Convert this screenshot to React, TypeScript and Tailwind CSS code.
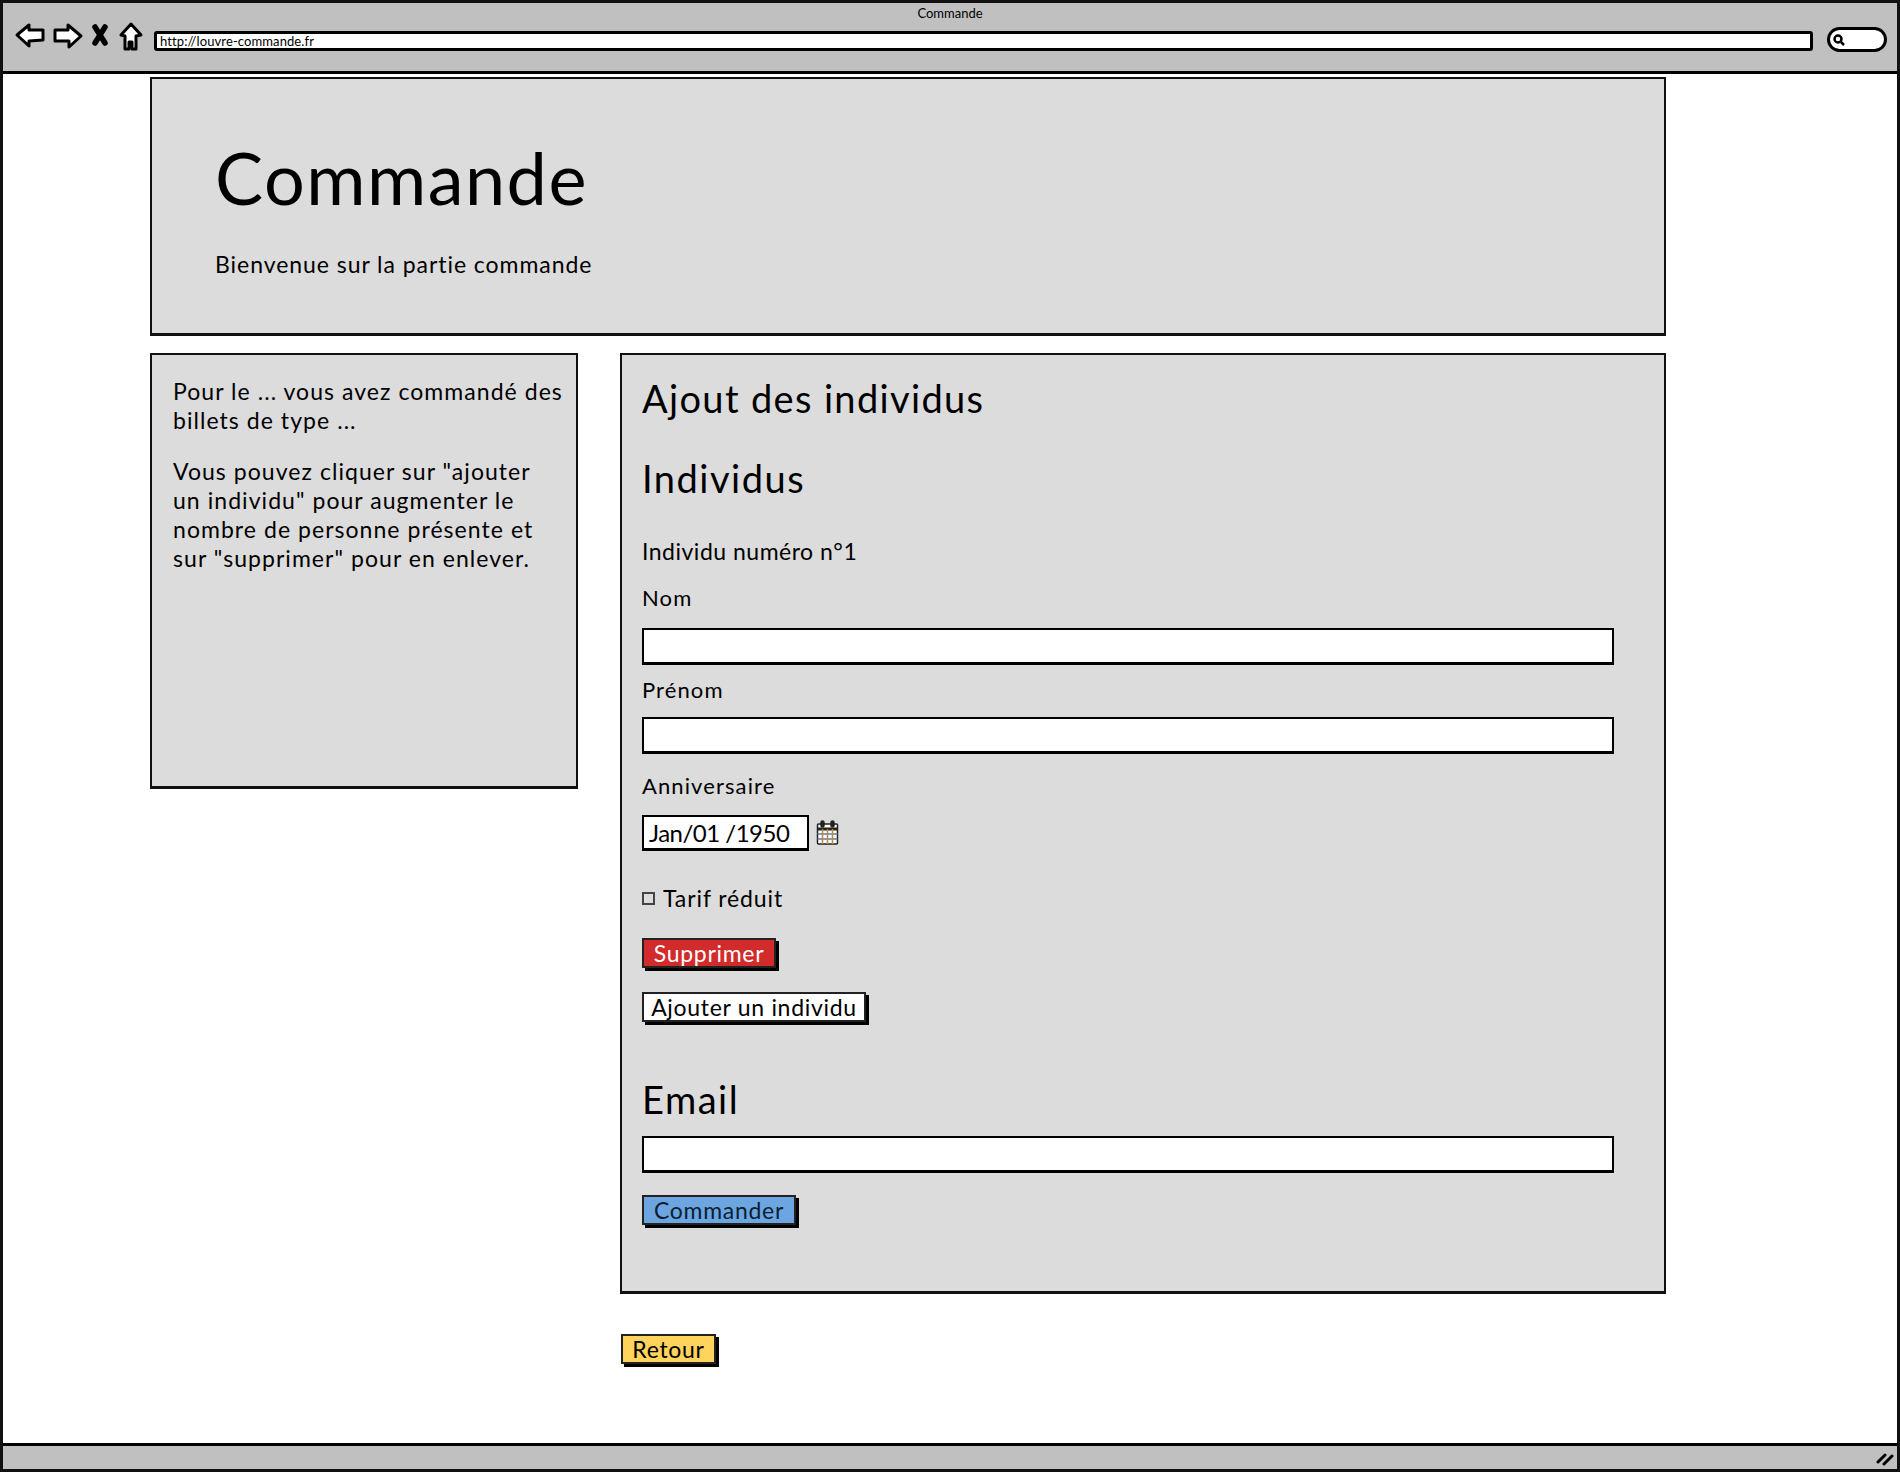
import React from "react";

function Field({ label, mt }: { label: string; mt: string }) {
  return (
    <div className={mt}>
      <div className="text-[22px] leading-[28px] tracking-[1.1px]">{label}</div>
    </div>
  );
}

function Input({ mt }: { mt: string }) {
  return <div className={`${mt} h-[37px] w-[972px] bg-white border-2 border-black border-b-[3px]`} />;
}

function Btn({ children, bg, text, mt, w }: { children: React.ReactNode; bg: string; text: string; mt: string; w: string }) {
  return (
    <div className={`${mt} ${w} ${bg} ${text} h-[30px] border-2 border-[#222] shadow-[3px_3px_0_#000] text-[23px] leading-[26px] text-center tracking-[0.7px]`}>
      {children}
    </div>
  );
}

export default function App() {
  return (
    <div className="w-[1900px] h-[1472px] bg-white border-[3px] border-[#111] flex flex-col text-black font-['Lato','Liberation_Sans',sans-serif] overflow-hidden">
      <div className="h-[71px] shrink-0 bg-[#c0c0c0] border-b-[3px] border-black relative">
        <div className="text-center text-[13px] leading-[16px] pt-[2px]">Commande</div>
        <div className="flex items-center pl-[11px] mt-[3px]">
          <svg width="130" height="34" viewBox="0 0 130 34" fill="white" stroke="black" strokeWidth="3" strokeLinejoin="round" className="shrink-0 -mt-[3px]">
            <path d="M3 14 L15 4 L15 9 L29 9 L29 19 L15 20 L15 25 Z" />
            <path d="M41 9 L54 9 L54 4 L67 15 L55 26 L55 20 L41 20 Z" />
            <path d="M81 6 L91 22 M91 6 L81 22" strokeWidth="5.5" fill="none" strokeLinecap="round" />
            <path d="M107 14 L117 3 L127 14 L122 15 L122 28 L118 28 L118 21 L115 21 L115 28 L111 28 L111 15 Z" />
          </svg>
          <div className="ml-[10px] mt-[2px] w-[1659px] h-[20px] bg-white border-[3px] border-black rounded-[3px] text-[13px] leading-[14px] pl-[3px] tracking-[0.1px]">http://louvre-commande.fr</div>
          <div className="ml-[14px] w-[60px] h-[25px] bg-white border-[3px] border-black rounded-[13px] flex items-center pl-[2px]">
            <svg width="14" height="14" viewBox="0 0 14 14" fill="none" stroke="black" strokeWidth="2.5"><circle cx="6" cy="6" r="3.5" /><path d="M9 9 L12 12" /></svg>
          </div>
        </div>
      </div>

      <div className="flex-1 min-h-0 pl-[147px] pt-[3px]">
        <div className="w-[1516px] h-[259px] bg-[#dcdcdc] border-2 border-[#111] border-b-[3px] pl-[63px] pt-[59px]">
          <div className="text-[72px] leading-[78px] tracking-[1.5px]">Commande</div>
          <div className="mt-[33px] text-[23px] leading-[30px] tracking-[0.95px]">Bienvenue sur la partie commande</div>
        </div>

        <div className="flex gap-[42px] mt-[17px] items-start">
          <div className="w-[428px] h-[436px] bg-[#dcdcdc] border-2 border-[#111] border-b-[3px] pl-[21px] pr-[8px] pt-[22px] text-[23px] leading-[29px] tracking-[1.05px]">
            <p className="whitespace-nowrap">Pour le ... vous avez commandé des<br />billets de type ...</p>
            <p className="mt-[22px] whitespace-nowrap">Vous pouvez cliquer sur "ajouter<br />un individu" pour augmenter le<br />nombre de personne présente et<br />sur "supprimer" pour en enlever.</p>
          </div>

          <div className="flex flex-col">
            <div className="w-[1046px] h-[941px] bg-[#dcdcdc] border-2 border-[#111] border-b-[3px] pl-[20px] pt-[20px]">
              <div className="text-[38px] leading-[46px] tracking-[1.35px]">Ajout des individus</div>
              <div className="mt-[34px] text-[38px] leading-[46px] tracking-[1.5px]">Individus</div>
              <div className="mt-[35px] text-[23px] leading-[30px] tracking-[0.5px]">Individu numéro n°1</div>
              <Field label="Nom" mt="mt-[18px]" />
              <Input mt="mt-[16px]" />
              <Field label="Prénom" mt="mt-[11px]" />
              <Input mt="mt-[13px]" />
              <Field label="Anniversaire" mt="mt-[18px]" />
              <div className="mt-[15px] flex items-center">
                <div className="w-[167px] h-[36px] bg-white border-2 border-black border-b-[3px] pl-[5px] text-[24px] leading-[31px] tracking-[-0.5px]">Jan/01 /1950</div>
                <svg className="ml-[7px]" width="24" height="26" viewBox="0 0 24 26" fill="white" stroke="#222" strokeWidth="1.5">
                  <rect x="1.5" y="4" width="20" height="20" rx="1" />
                  <path d="M1.5 9 H21.5" strokeWidth="3" />
                  <path d="M1.5 14 H21.5 M1.5 19 H21.5" stroke="#5b7fa6" />
                  <path d="M6.5 9 V24 M11.5 9 V24 M16.5 9 V24" stroke="#b8893f" />
                  <rect x="5" y="1" width="3" height="6" rx="1.5" fill="#222" />
                  <rect x="15" y="1" width="3" height="6" rx="1.5" fill="#222" />
                </svg>
              </div>
              <div className="mt-[32px] flex items-center h-[30px]">
                <div className="w-[13px] h-[13px] bg-transparent border-2 border-[#444]" />
                <div className="ml-[8px] text-[23px] tracking-[0.9px]">Tarif réduit</div>
              </div>
              <Btn bg="bg-[#d22b2b]" text="text-white" mt="mt-[25px]" w="w-[134px]">Supprimer</Btn>
              <Btn bg="bg-white" text="text-black" mt="mt-[24px]" w="w-[224px]">Ajouter un individu</Btn>
              <div className="mt-[54px] text-[38px] leading-[46px] tracking-[1.5px]">Email</div>
              <Input mt="mt-[14px]" />
              <Btn bg="bg-[#6ca5e0]" text="text-[#0a1f33]" mt="mt-[22px]" w="w-[154px]">Commander</Btn>
            </div>
            <Btn bg="bg-[#ffd35c]" text="text-black" mt="mt-[40px] ml-[1px]" w="w-[95px]">Retour</Btn>
          </div>
        </div>
      </div>

      <div className="h-[26px] shrink-0 bg-[#c0c0c0] border-t-[3px] border-black flex items-center justify-end pr-[3px]">
        <svg width="18" height="16" viewBox="0 0 18 16" stroke="black" strokeWidth="3" strokeLinecap="round"><path d="M2 12 L9 5 M8 14 L16 6" /></svg>
      </div>
    </div>
  );
}
